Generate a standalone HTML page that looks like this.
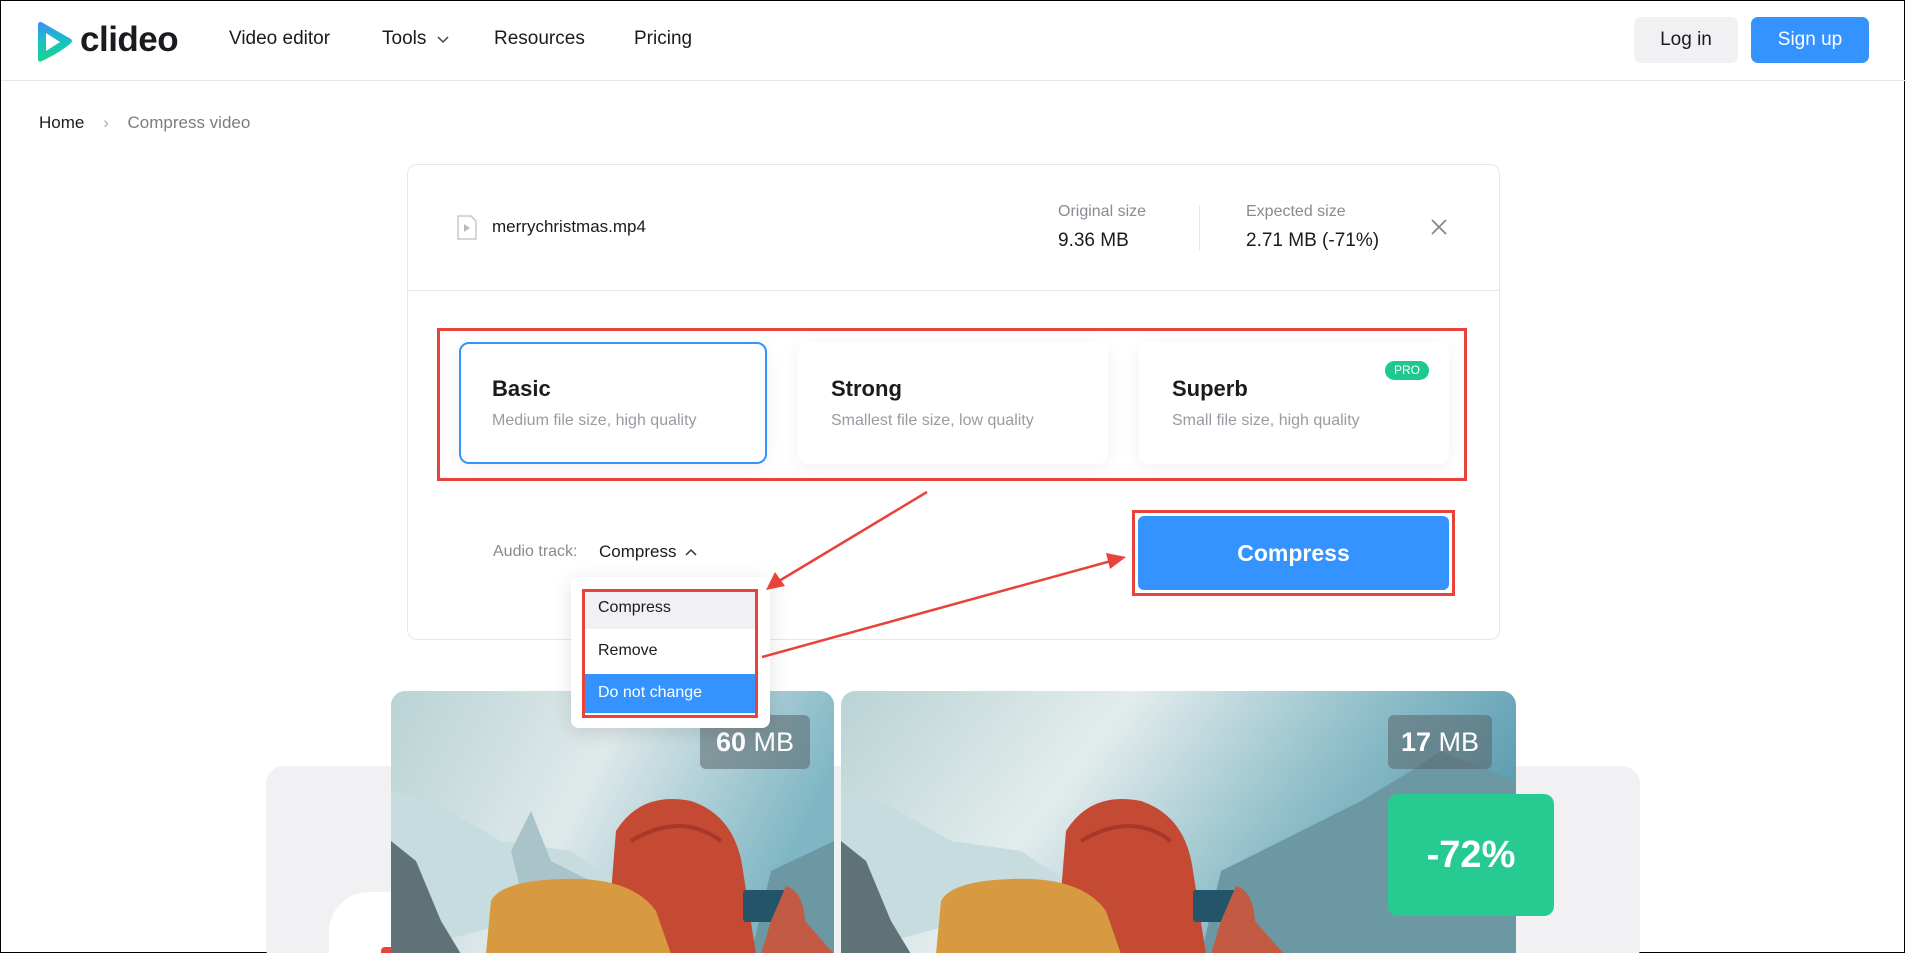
<!DOCTYPE html>
<html><head><meta charset="utf-8"><style>
*{box-sizing:border-box;margin:0;padding:0}
html,body{width:1905px;height:953px;overflow:hidden;background:#fff}
body{font-family:"Liberation Sans",sans-serif;color:#1b1b1f;position:relative;border:1px solid #000}
.a{position:absolute}
.nav{font-size:19px;color:#1b1b1f;top:27px}
.btn{border-radius:7px;font-size:19px;text-align:center;line-height:46px;height:46px;top:16px}
.opt{background:#fff;border-radius:10px;box-shadow:0 4px 18px rgba(0,0,0,.06);height:122px;top:341px}
.opt b{position:absolute;left:33px;top:34px;font-size:22px;font-weight:bold;color:#1b1b1f}
.opt span{position:absolute;left:33px;top:70px;font-size:16px;color:#9a9aa2}
.red{border:3px solid #e8433a}
.img{overflow:hidden;border-radius:14px 14px 0 0;top:690px;height:263px}
.badge{top:24px;height:54px;background:rgba(90,100,105,.55);border-radius:6px;color:#fff;font-size:27px;line-height:54px;text-align:center}
</style></head><body>
<!-- header -->
<svg class="a" style="left:36px;top:20px" width="36" height="42" viewBox="0 0 36 42">
<defs><linearGradient id="lg" x1="0" y1="0" x2="0" y2="1"><stop offset="0" stop-color="#3a8ff7"/><stop offset=".5" stop-color="#19c3c0"/><stop offset="1" stop-color="#1dd38e"/></linearGradient></defs>
<path d="M3 1 Q1 1 1 4 L1 38 Q1 42 5 40 Q24 31 34 22 Q36 20 34 18 L6 2 Q4 0.5 3 1Z" fill="url(#lg)"/><path d="M9 12 L23 21 L9 30 Z" fill="#fff"/></svg>
<div class="a" style="left:79px;top:19px;font-size:35px;font-weight:bold;letter-spacing:-0.5px;color:#1b1b1f">clideo</div>
<div class="a nav" style="left:228px">Video editor</div>
<div class="a nav" style="left:381px">Tools <svg width="14" height="10" viewBox="0 0 14 10" style="margin-left:4px"><path d="M2 3l5 5 5-5" fill="none" stroke="#444" stroke-width="1.5"/></svg></div>
<div class="a nav" style="left:493px">Resources</div>
<div class="a nav" style="left:633px">Pricing</div>
<div class="a btn" style="left:1633px;width:104px;background:#f1f1f3">Log in</div>
<div class="a btn" style="left:1750px;width:118px;background:#3593ff;color:#fff">Sign up</div>
<div class="a" style="left:0;top:79px;width:1905px;height:1px;background:#e6e6e9"></div>
<div class="a" style="left:38px;top:112px;font-size:17px">Home <span style="color:#aaa;margin:0 14px">&#8250;</span> <span style="color:#7b7b83">Compress video</span></div>

<!-- card -->
<div class="a" style="left:406px;top:163px;width:1093px;height:476px;border:1px solid #e8e8eb;border-radius:10px"></div>
<svg class="a" style="left:455px;top:214px" width="22" height="26" viewBox="0 0 22 26"><path d="M2 1h13l5 5v18H2z" fill="none" stroke="#c8c8cc" stroke-width="1.5"/><path d="M8 9l6 4-6 4z" fill="#bbb"/></svg>
<div class="a" style="left:491px;top:216px;font-size:17px">merrychristmas.mp4</div>
<div class="a" style="left:1057px;top:202px;font-size:16px;color:#8a8a92">Original size</div>
<div class="a" style="left:1057px;top:229px;font-size:19px">9.36 MB</div>
<div class="a" style="left:1198px;top:204px;width:1px;height:46px;background:#e6e6e9"></div>
<div class="a" style="left:1245px;top:202px;font-size:16px;color:#8a8a92">Expected size</div>
<div class="a" style="left:1245px;top:229px;font-size:19px">2.71 MB (-71%)</div>
<svg class="a" style="left:1429px;top:217px" width="18" height="18" viewBox="0 0 18 18"><path d="M2 2l14 14M16 2L2 16" stroke="#888" stroke-width="1.8"/></svg>
<div class="a" style="left:407px;top:289px;width:1091px;height:1px;background:#e8e8eb"></div>

<div class="a red" style="left:436px;top:327px;width:1030px;height:153px"></div>
<div class="a opt" style="left:458px;width:308px;border:2px solid #3593ff"><b style="left:31px;top:32px">Basic</b><span style="left:31px;top:68px">Medium file size, high quality</span></div>
<div class="a opt" style="left:797px;width:310px"><b>Strong</b><span>Smallest file size, low quality</span></div>
<div class="a opt" style="left:1138px;width:310px"><b>Superb</b><span>Small file size, high quality</span>
<div class="a" style="left:246px;top:19px;width:44px;height:19px;border-radius:10px;background:#1dc98f;color:#fff;font-size:12px;text-align:center;line-height:19px">PRO</div></div>

<div class="a" style="left:492px;top:542px;font-size:16px;color:#8a8a92">Audio track:</div>
<div class="a" style="left:598px;top:541px;font-size:17px">Compress <svg width="14" height="10" viewBox="0 0 14 10" style="margin-left:3px"><path d="M2 8l5-5 5 5" fill="none" stroke="#333" stroke-width="1.5"/></svg></div>

<div class="a red" style="left:1131px;top:509px;width:323px;height:86px"></div>
<div class="a" style="left:1137px;top:515px;width:311px;height:74px;background:#3593ff;border-radius:6px;color:#fff;font-size:23px;font-weight:bold;text-align:center;line-height:74px">Compress</div>

<!-- bottom area -->
<div class="a" style="left:265px;top:765px;width:1374px;height:200px;background:#f1f1f4;border-radius:18px"></div>
<div class="a" style="left:328px;top:891px;width:187px;height:80px;background:#fff;border-radius:40px 40px 0 0"><div class="a" style="left:52px;top:55px;width:30px;height:12px;background:#e8433a;border-radius:4px"></div></div>

<div class="a img" style="left:390px;width:443px">
<svg width="443" height="263" viewBox="0 0 443 263" preserveAspectRatio="none">
<defs><linearGradient id="sk" x1="0" y1="0" x2="1" y2="0.3"><stop offset="0" stop-color="#b9d3d4"/><stop offset=".5" stop-color="#dfe9ea"/><stop offset="1" stop-color="#7fb6c4"/></linearGradient></defs>
<rect width="443" height="263" fill="url(#sk)"/>
<path d="M0 100 L40 110 L110 150 L180 160 L240 200 L0 263Z" fill="#c6dcdf"/>
<path d="M0 150 L25 170 L50 230 L70 263 L0 263Z" fill="#5f7278"/>
<path d="M120 160 L140 120 L160 170 L200 190 L130 200Z" fill="#a9c4c8"/>
<path d="M380 180 L443 150 L443 263 L360 263Z" fill="#6c98a4"/>
<path d="M225 140 Q250 100 300 110 Q345 125 352 180 L365 263 L215 263 Z" fill="#c54a34"/>
<path d="M240 150 Q290 120 330 150" stroke="#a63828" stroke-width="4" fill="none"/>
<path d="M100 210 Q110 190 170 188 Q240 185 265 220 L280 263 L95 263Z" fill="#d79a40"/>
<rect x="352" y="199" width="52" height="32" rx="3" fill="#23546a"/>
<path d="M395 195 Q412 200 414 230 L443 263 L370 263 L380 230Z" fill="#c25a44"/>
</svg>
<div class="a badge" style="left:309px;width:110px"><b>60</b> MB</div>
</div>
<div class="a img" style="left:840px;width:675px">
<svg width="675" height="263" viewBox="0 0 675 263" preserveAspectRatio="none">
<defs><linearGradient id="sk2" x1="0" y1="0" x2="1" y2="0.3"><stop offset="0" stop-color="#b9d3d4"/><stop offset=".4" stop-color="#e3ecec"/><stop offset=".75" stop-color="#8dbdc8"/><stop offset="1" stop-color="#5f9fb3"/></linearGradient></defs>
<rect width="675" height="263" fill="url(#sk2)"/>
<path d="M0 100 L40 110 L110 150 L180 160 L240 200 L0 263Z" fill="#c6dcdf"/>
<path d="M0 150 L25 170 L50 230 L70 263 L0 263Z" fill="#5f7278"/>
<path d="M380 180 L520 110 L570 80 L600 60 L675 90 L675 263 L360 263Z" fill="#6c98a4"/>
<path d="M225 140 Q250 100 300 110 Q345 125 352 180 L365 263 L215 263 Z" fill="#c54a34"/>
<path d="M240 150 Q290 120 330 150" stroke="#a63828" stroke-width="4" fill="none"/>
<path d="M100 210 Q110 190 170 188 Q240 185 265 220 L280 263 L95 263Z" fill="#d79a40"/>
<rect x="352" y="199" width="52" height="32" rx="3" fill="#23546a"/>
<path d="M395 195 Q412 200 414 230 L443 263 L370 263 L380 230Z" fill="#c25a44"/>
</svg>
<div class="a badge" style="left:547px;width:104px"><b>17</b> MB</div>
</div>
<div class="a" style="left:1387px;top:793px;width:166px;height:122px;background:#27ca91;border-radius:10px;color:#fff;font-size:38px;font-weight:bold;text-align:center;line-height:122px">-72%</div>

<!-- dropdown -->
<div class="a" style="left:570px;top:576px;width:199px;height:151px;background:#fff;border-radius:8px;box-shadow:0 4px 20px rgba(0,0,0,.12)">
<div class="a" style="left:12px;top:13px;width:175px;height:39px;background:#f1f1f3"></div>
<div class="a" style="left:27px;top:22px;font-size:16px">Compress</div>
<div class="a" style="left:27px;top:65px;font-size:16px">Remove</div>
<div class="a" style="left:12px;top:97px;width:175px;height:39px;background:#3593ff"></div>
<div class="a" style="left:27px;top:107px;font-size:16px;color:#fff">Do not change</div>
</div>
<div class="a red" style="left:581px;top:588px;width:176px;height:129px"></div>

<!-- arrows -->
<svg class="a" style="left:0;top:0" width="1905" height="953">
<line x1="926" y1="491" x2="778" y2="580" stroke="#e8433a" stroke-width="2.5"/>
<path d="M765 589 L774 571 L784 585Z" fill="#e8433a"/>
<line x1="761" y1="656" x2="1110" y2="560" stroke="#e8433a" stroke-width="2.5"/>
<path d="M1125 556 L1105 552 L1109 568Z" fill="#e8433a"/>
</svg>
</body></html>
